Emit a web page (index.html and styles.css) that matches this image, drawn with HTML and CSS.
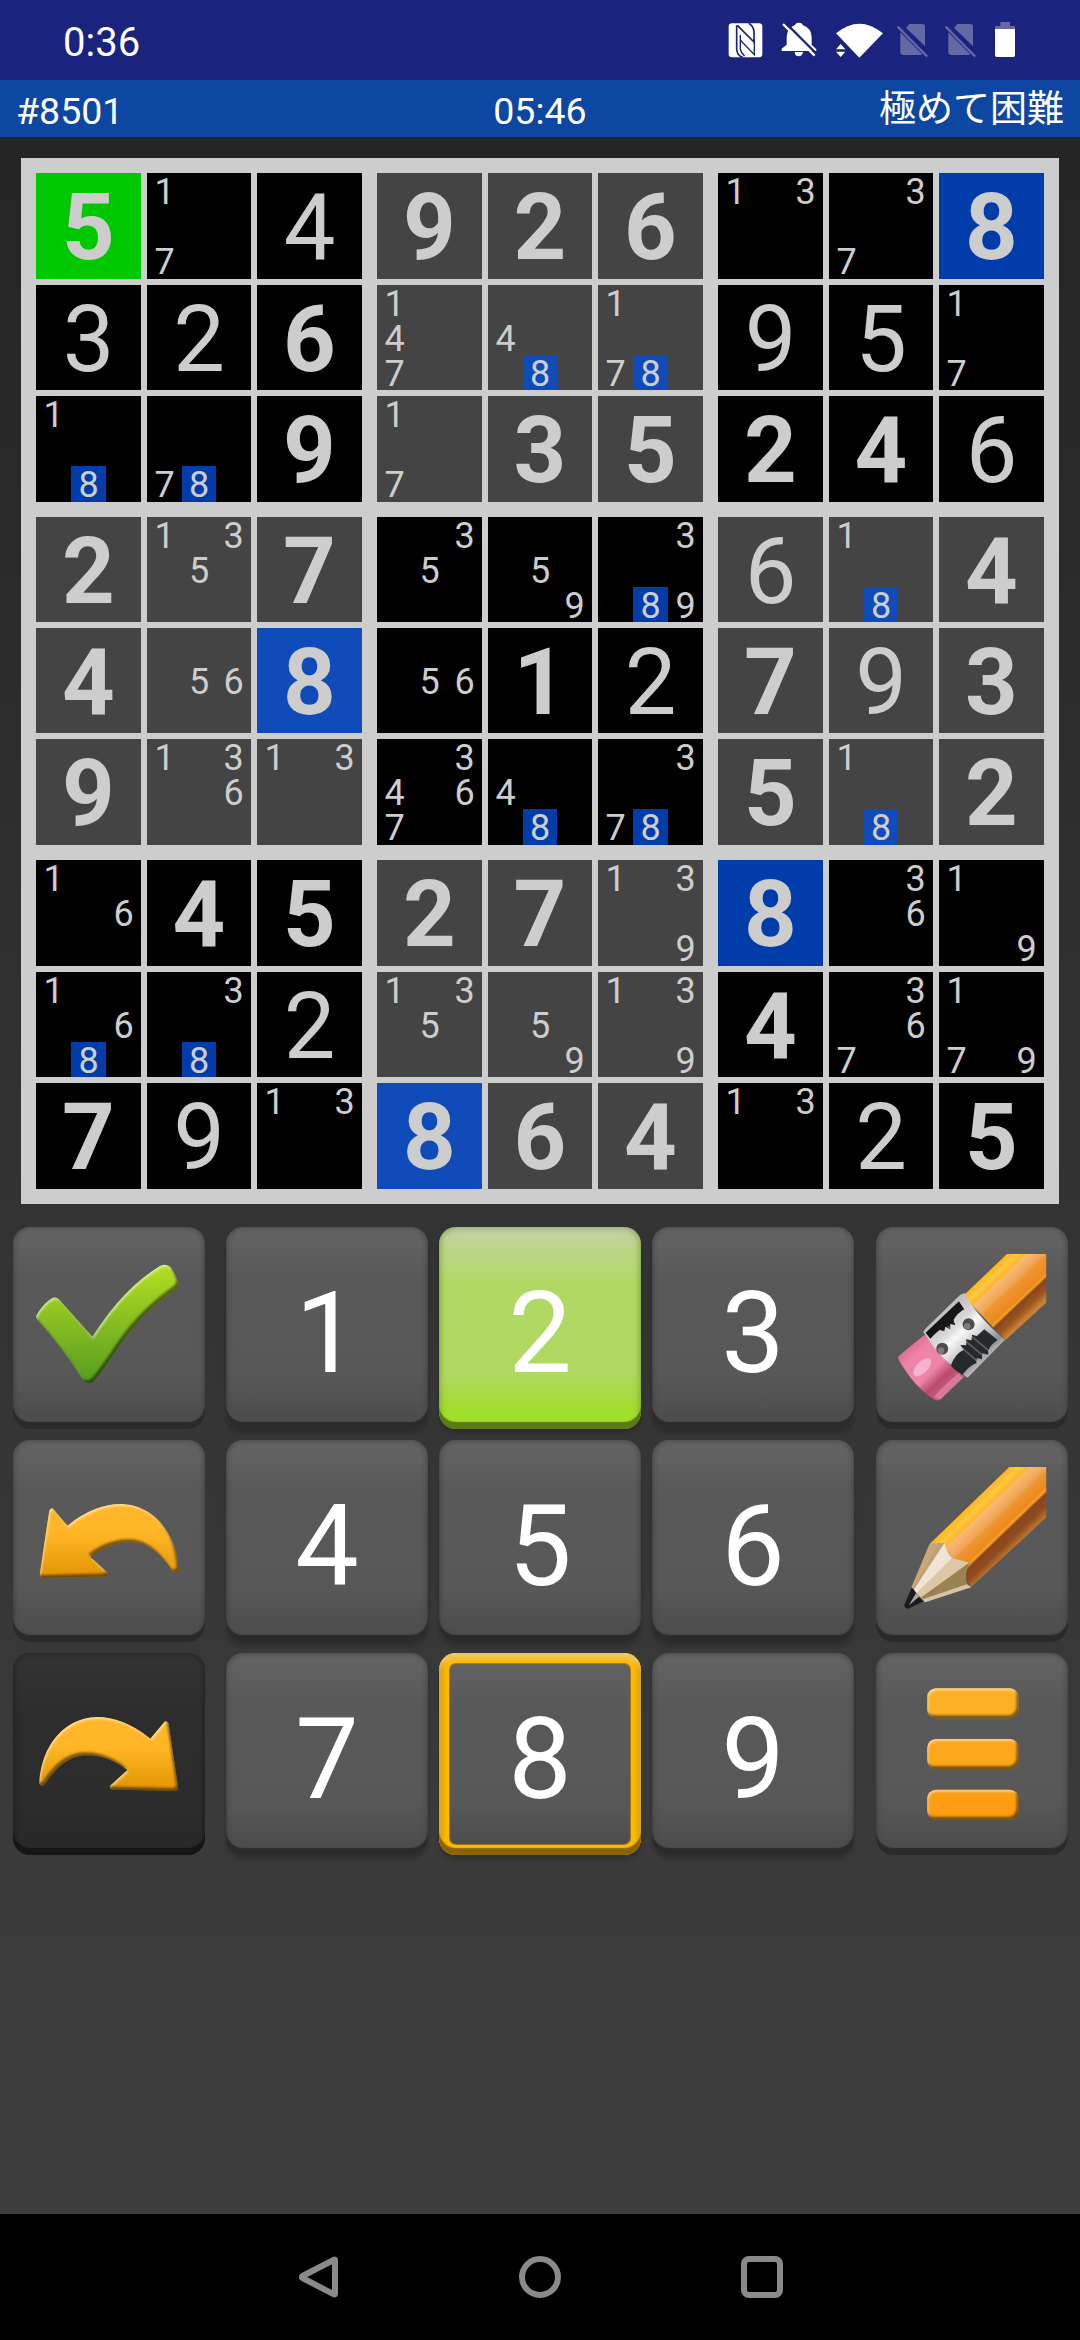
FILE: index.html
```html
<!DOCTYPE html>
<html lang="ja">
<head>
<meta charset="utf-8">
<title>Sudoku #8501</title>
<link rel="stylesheet" href="styles.css">
</head>
<body>
<div class="status">
  <span class="clock">0:36</span>
  <div class="status-icons">
    <svg class="nfc" viewBox="144 66 108 108" width="36" height="36"><rect x="146" y="70" width="101" height="102" rx="10" fill="#fff"/><path d="M170 76V146Q171 166 188 172M172 76L222 126V96Q221 78 206 70" fill="none" stroke="#1a237e" stroke-width="5"/><path d="M181 104V147Q182 158 194 168M223 116V164L180 119" fill="none" stroke="#1a237e" stroke-width="4"/></svg>
    <svg class="bell" viewBox="303 66 111 108" width="37" height="36"><path d="M356 68Q366 68 368 75Q394 84 395 112V134L409 148V153H305V146L320 134V112Q321 84 345 75Q347 68 356 68ZM344 156H369Q367 169 356 169T344 156Z" fill="#fff"/><path d="M316 68L412 164" stroke="#1a237e" stroke-width="7"/><path d="M309 72L404 167" stroke="#fff" stroke-width="7"/></svg>
    <svg class="wifi" viewBox="465 66 147 108" width="49" height="36"><path d="M468 100Q538 42 609 100L538 173Z" fill="#fff"/><path d="M482 122L507 147V162H460V140Z" fill="#1a237e"/><path d="M482 132L496 148H468ZM468 155H496L482 171Z" fill="#fff"/></svg>
    <svg class="sim" viewBox="648 66 99 108" width="33" height="36"><g fill="#6469a6"><path d="M688 72H727Q735 72 735 80V139L678 83ZM661 97L727 163Q725 165 720 165H669Q661 165 661 157Z"/><path d="M650 82L655 77L744 167L739 172Z"/></g></svg>
    <svg class="sim" viewBox="648 66 99 108" width="33" height="36"><g fill="#6469a6"><path d="M688 72H727Q735 72 735 80V139L678 83ZM661 97L727 163Q725 165 720 165H669Q661 165 661 157Z"/><path d="M650 82L655 77L744 167L739 172Z"/></g></svg>
    <svg class="battery" viewBox="942 66 66 108" width="22" height="36"><path d="M945 87V80Q945 78 948 78H961V66H990V78H1002Q1005 78 1005 80V87Z" fill="#6469a6"/><path d="M945 87H1005V166Q1005 171 1000 171H950Q945 171 945 166Z" fill="#fff"/></svg>
  </div>
</div>
<header class="info">
  <span>#8501</span>
  <span class="timer">05:46</span>
  <span class="level">極めて困難</span>
</header>
<main class="game">
  <div class="board" id="board"></div>

  <div class="pad">
    <button class="key tool"><svg viewBox="39 51 576 606"><g filter="url(#bevel)"><path d="M110 315Q130 280 155 265Q167 258 178 268L278 380Q370 235 480 168Q500 158 514 172Q530 195 536 218Q538 230 524 240C440 300 390 360 340 435Q310 480 282 514Q266 527 252 514Q190 415 115 333Q106 325 110 315Z" fill="url(#green)"/></g></svg></button>
    <button class="key num">1</button>
    <button class="key num lime">2</button>
    <button class="key num">3</button>
    <button class="key tool"><svg viewBox="48 51 573 606">
      <path d="M440 132H558V278L436 390L308 258Z" fill="url(#wood1)"/>
      <path d="M193 374L115 438Q111 444 117 452Q165 535 225 570Q235 573 242 568L312 500Z" fill="url(#pink)"/>
      <ellipse cx="186" cy="472" rx="34" ry="17" transform="rotate(-45 186 472)" fill="#f9b3cd"/>
      <path d="M222 562Q226 548 296 488L306 504L240 568Z" fill="#d9799a"/>
      <path d="M313 249Q350 320 434 389L322 503Q240 450 189 366Q192 360 200 352L300 254Z" fill="url(#metal)"/>
      <path d="M296 274L312 298Q290 310 280 330L285 345L270 342L270 358L255 350L252 364L238 360Q220 375 210 386L196 368Z" fill="#151515"/>
      <path d="M372 358L412 390Q380 410 384 434L366 430L365 448L350 444L348 460Q330 465 306 494Q280 480 272 466Q285 430 310 420L300 405L318 406L318 388L334 391L335 374L350 378Z" fill="#242a2b"/>
      <path d="M262 348L372 440M246 362L356 458M280 334L388 424" stroke="#dcdcdc" stroke-width="5" opacity=".3"/>
      <circle cx="325" cy="343" r="18" fill="#4b4e4e"/><circle cx="321" cy="349" r="10" fill="#7b7b7b"/>
      <circle cx="246" cy="416" r="18" fill="#4b4e4e"/><circle cx="242" cy="422" r="10" fill="#7b7b7b"/>
    </svg></button>

    <button class="key tool"><svg viewBox="39 30 576 606"><g filter="url(#bevel)"><path id="arrow" d="M160 236L203 287C260 240 320 221 365 222C460 225 530 305 537 420Q532 433 520 424C475 355 430 335 388 337C345 338 305 355 272 381L323 428Q328 438 315 440L130 444Q118 443 120 430L148 242Q153 231 160 236Z" fill="url(#amber)"/></g></svg></button>
    <button class="key num">4</button>
    <button class="key num">5</button>
    <button class="key num">6</button>
    <button class="key tool"><svg viewBox="48 30 573 606">
      <path d="M447 111H558V262L332 472L290 400L208 342Z" fill="url(#wood2)"/>
      <path d="M208 342Q235 340 253 338Q260 372 276 384Q300 390 327 398Q310 435 320 463L332 472L194 517L154 472Z" fill="#b39a6c"/>
      <path d="M208 342L236 340L163 478L154 472Z" fill="#c9a676"/>
      <path d="M236 340L253 338L162 485L158 476Z" fill="#bfa07a"/>
      <path d="M253 338Q260 372 276 384L176 496L160 480Z" fill="#efe4d6"/>
      <path d="M276 384Q300 390 327 398L188 508L168 490Z" fill="#dcc7a6"/>
      <path d="M327 398Q310 435 320 463L194 512L183 502Z" fill="#998352"/>
      <path d="M320 463L332 472L194 517L188 508Z" fill="#d8c4a4"/>
      <path d="M154 474L132 525Q133 536 144 536L190 514Q172 502 162 480Z" fill="#1b1b1b"/>
      <path d="M167 490L146 526L178 499Z" fill="#a5a5a5"/>
    </svg></button>

    <button class="key tool off"><svg viewBox="39 30 576 606"><g filter="url(#bevel)"><use href="#arrow" transform="translate(655 0) scale(-1 1)"/></g></svg></button>
    <button class="key num">7</button>
    <button class="key num ring">8</button>
    <button class="key num">9</button>
    <button class="key tool"><svg viewBox="48 669 573 606">
      <g filter="url(#bevel)"><rect x="201" y="775" width="274" height="90" rx="26" fill="#fcb025"/><rect x="201" y="927" width="274" height="90" rx="26" fill="#fca61b"/><rect x="201" y="1079" width="274" height="90" rx="26" fill="#fc9d12"/></g>
    </svg></button>
  </div>
</main>
<nav class="nav">
  <svg viewBox="0 0 44 44" width="44" height="44"><path d="M38.500 4.500Q39 4 39 5.500V38.500Q39 40 37.500 39.200L6.500 23Q5 22 6.500 21Z" /></svg>
  <svg viewBox="0 0 44 44" width="44" height="44"><circle cx="22" cy="22" r="18"/></svg>
  <svg viewBox="0 0 44 44" width="44" height="44"><rect x="4" y="4" width="36" height="36" rx="5"/></svg>
</nav>

<svg class="defs" width="0" height="0" aria-hidden="true">
  <defs>
    <filter id="bevel" x="-5%" y="-5%" width="110%" height="110%" color-interpolation-filters="sRGB">
      <feGaussianBlur in="SourceAlpha" stdDeviation="3" result="b"/>
      <feOffset in="b" dx="-5" dy="-8" result="up"/>
      <feOffset in="b" dx="4" dy="7" result="down"/>
      <feFlood flood-color="#fff" flood-opacity=".5"/>
      <feComposite in2="down" operator="out"/>
      <feComposite in2="SourceAlpha" operator="in" result="light"/>
      <feFlood flood-color="#000" flood-opacity=".5"/>
      <feComposite in2="up" operator="out"/>
      <feComposite in2="SourceAlpha" operator="in" result="dark"/>
      <feMerge><feMergeNode in="SourceGraphic"/><feMergeNode in="light"/><feMergeNode in="dark"/></feMerge>
    </filter>
    <linearGradient id="green" x1="0" y1="0" x2="0" y2="1"><stop offset="0" stop-color="#b4df22"/><stop offset="1" stop-color="#569c20"/></linearGradient>
    <linearGradient id="amber" x1="0" y1="0" x2="0" y2="1"><stop offset="0" stop-color="#ffb72b"/><stop offset=".4" stop-color="#ffb626"/><stop offset="1" stop-color="#e29400"/></linearGradient>
    <linearGradient id="wood1" gradientUnits="userSpaceOnUse" x1="376" y1="193" x2="499" y2="323">
      <stop offset="0" stop-color="#ffb31a"/><stop offset=".12" stop-color="#ffca42"/><stop offset=".2" stop-color="#ffb52c"/><stop offset=".25" stop-color="#f9b970"/><stop offset=".42" stop-color="#f0a556"/><stop offset=".47" stop-color="#ee9530"/><stop offset=".68" stop-color="#ec8a1c"/><stop offset=".71" stop-color="#f6a623"/><stop offset=".75" stop-color="#8a4520"/><stop offset=".88" stop-color="#98561f"/><stop offset="1" stop-color="#c98030"/>
    </linearGradient>
    <linearGradient id="wood2" gradientUnits="userSpaceOnUse" x1="447" y1="111" x2="576" y2="245">
      <stop offset="0" stop-color="#ffb31a"/><stop offset=".12" stop-color="#ffca42"/><stop offset=".2" stop-color="#ffb52c"/><stop offset=".25" stop-color="#f9b970"/><stop offset=".42" stop-color="#f0a556"/><stop offset=".47" stop-color="#ee9530"/><stop offset=".64" stop-color="#ec8a1c"/><stop offset=".68" stop-color="#f6a623"/><stop offset=".72" stop-color="#8a4520"/><stop offset=".86" stop-color="#8e4b1f"/><stop offset="1" stop-color="#c27a2c"/>
    </linearGradient>
    <linearGradient id="pink" gradientUnits="userSpaceOnUse" x1="150" y1="405" x2="275" y2="540">
      <stop offset="0" stop-color="#dd6e90"/><stop offset=".2" stop-color="#ef84aa"/><stop offset=".55" stop-color="#ef84aa"/><stop offset=".75" stop-color="#b94a6c"/><stop offset="1" stop-color="#c76585"/>
    </linearGradient>
    <linearGradient id="metal" gradientUnits="userSpaceOnUse" x1="245" y1="305" x2="375" y2="447">
      <stop offset="0" stop-color="#bdbdbd"/><stop offset=".3" stop-color="#d8d8d8"/><stop offset=".45" stop-color="#fafafa"/><stop offset=".65" stop-color="#cfcfcf"/><stop offset=".9" stop-color="#8d9191"/><stop offset="1" stop-color="#b5b5b5"/>
    </linearGradient>
  </defs>
</svg>
<script src="board.js"></script>
</body>
</html>
```
FILE: styles.css
```css
* { box-sizing: border-box; }
body {
  margin: 0;
  width: 1080px;
  height: 2340px;
  display: flex;
  flex-direction: column;
  background: #000;
  font-family: Roboto, "Noto Sans CJK JP", sans-serif;
  overflow: hidden;
}
svg { display: block; }
.defs { position: absolute; }

/* status bar */
.status {
  height: 80px;
  padding: 2px 64px 0 63px;
  background: #1a237e;
  color: #fff;
  display: flex;
  justify-content: space-between;
  align-items: center;
}
.clock { font-size: 40px; line-height: 80px; padding-top: 3px; }
.status-icons { display: flex; align-self: flex-start; padding-top: 20px; }
.bell, .wifi, .battery { margin-left: 17px; }
.sim { margin-left: 12px; }
.sim + .sim { margin-left: 15px; }

/* puzzle info */
.info {
  height: 57px;
  padding: 0 16px;
  background: #0d47a1;
  color: #fff;
  font-size: 37.5px;
  line-height: 62px;
  display: grid;
  grid-template-columns: 1fr auto 1fr;
}
.level { text-align: right; font-size: 37px; line-height: 59px; }

.game {
  flex: 1;
  background: linear-gradient(#252525, #333 52%, #3e3e3e);
  padding-top: 21px;
}

/* board */
.board {
  width: 1038px;
  margin: 0 auto;
  padding: 15px;
  background: #cdcdcd;
  display: grid;
  grid-template-columns: repeat(3, 326px);
  gap: 15px;
}
.box {
  display: grid;
  grid-template-columns: 105px 104px 105px;
  grid-template-rows: 106px 105px 106px;
  gap: 6px;
}
.box.middle { grid-template-rows: 105px 105px 106px; }
.cell {
  background: #000;
  color: #cdcdcd;
  font-size: 92px;
  line-height: 110px;
  text-align: center;
  min-height: 0;
  height: 100%;
}
.shade .cell { background: #444; }
.given { font-weight: 700; }
.cell.same { background: #003caa; }
.shade .cell.same { background: #0f4bb9; }
.cell.cursor { background: #00c800; }
.notes {
  display: grid;
  grid-template-columns: 35px 1fr 35px;
  grid-template-rows: 35px 35px 1fr;
  font-size: 36px;
  line-height: 39px;
}
.notes span { min-height: 0; height: 100%; }
.notes .same { background: #003caa; }
.shade .notes .same { background: #0f4bb9; }

/* key pad */
.pad {
  display: grid;
  grid-template-columns: 213px 213px 213px 224px 191px;
  grid-template-rows: repeat(3, 202px);
  row-gap: 11px;
  padding: 23px 13px 0;
}
.key {
  border: 0;
  padding: 0;
  height: 202px;
  border-radius: 17px;
  color: #fff;
  font: 400 113px/214px Roboto, sans-serif;
  background: linear-gradient(#646464, #595959 24%, #585858 73%, #4c4c4c 96%);
  box-shadow: inset 0 -7px 1px #2a2a2a, inset 0 0 5px 1px rgba(40, 40, 40, .45);
}
.key svg { width: 100%; height: 202px; }
.tool { width: 191.5px; }
.num {
  width: 202px;
  box-shadow: inset 0 -7px 1px #2b2b2b, inset 0 0 5px 1px rgba(40, 40, 40, .45), 0 4px 4px rgba(0, 0, 0, .2);
}
.lime {
  background: linear-gradient(#c6d2ae, #bdd58c 9%, #b0d963 28%, #afd961 73%, #a0df2a 92%);
  box-shadow: inset 0 -7px 1px #587c15, inset 0 0 6px 1px rgba(90, 125, 30, .6), 0 4px 4px rgba(0, 0, 0, .2);
}
.ring {
  box-shadow: inset 0 -7px 1px #8a6400, inset 0 5px 5px #ebcb70, inset 3px 0 4px #c99200, inset -3px 0 4px #c99200, inset 0 0 0 10px #ffb900, inset 0 0 1px 11px #a37a10, 0 4px 4px rgba(0, 0, 0, .2);
}
.off {
  background: linear-gradient(#343434, #2d2d2d 28%, #2c2c2c 75%, #272727);
  box-shadow: inset 0 -7px 1px #151515, inset 0 0 5px 1px rgba(20, 20, 20, .5);
}

/* system navigation */
.nav {
  height: 126px;
  display: flex;
  justify-content: center;
  align-items: center;
  gap: 178px;
}
.nav svg { fill: none; stroke: #8a8a8a; stroke-width: 6; stroke-linejoin: round; }
```
FILE: board.js
```js
// "g" marks a given digit, "n" a list of pencil notes, "*" the cursor.
const rows = [
  "*g5 n17 4 g9 g2 g6 n13 n37 g8",
  "3 2 g6 n147 n48 n178 9 5 n17",
  "n18 n78 g9 n17 g3 g5 g2 g4 6",
  "g2 n135 g7 n35 n59 n389 6 n18 g4",
  "g4 n56 g8 n56 g1 2 g7 9 g3",
  "g9 n136 n13 n3467 n48 n378 g5 n18 g2",
  "n16 g4 g5 g2 g7 n139 g8 n36 n19",
  "n168 n38 2 n135 n59 n139 g4 n367 n179",
  "g7 9 n13 g8 g6 g4 n13 2 g5"
].map(r => r.split(" "));
const active = "8";

function makeCell(token) {
  const cell = document.createElement("div");
  cell.className = "cell";
  if (token.startsWith("*")) { cell.classList.add("cursor"); token = token.slice(1); }
  if (token[0] === "n") {
    cell.classList.add("notes");
    for (const d of "123456789") {
      const note = document.createElement("span");
      if (token.includes(d)) {
        note.textContent = d;
        if (d === active) note.className = "same";
      }
      cell.append(note);
    }
    return cell;
  }
  if (token[0] === "g") { cell.classList.add("given"); token = token.slice(1); }
  if (token === active) cell.classList.add("same");
  cell.textContent = token;
  return cell;
}

const board = document.getElementById("board");
for (let b = 0; b < 9; b++) {
  const top = Math.floor(b / 3) * 3, left = (b % 3) * 3;
  const box = document.createElement("div");
  box.className = "box" + (b % 2 ? " shade" : "") + (top === 3 ? " middle" : "");
  for (let i = 0; i < 9; i++) box.append(makeCell(rows[top + Math.floor(i / 3)][left + i % 3]));
  board.append(box);
}
```
